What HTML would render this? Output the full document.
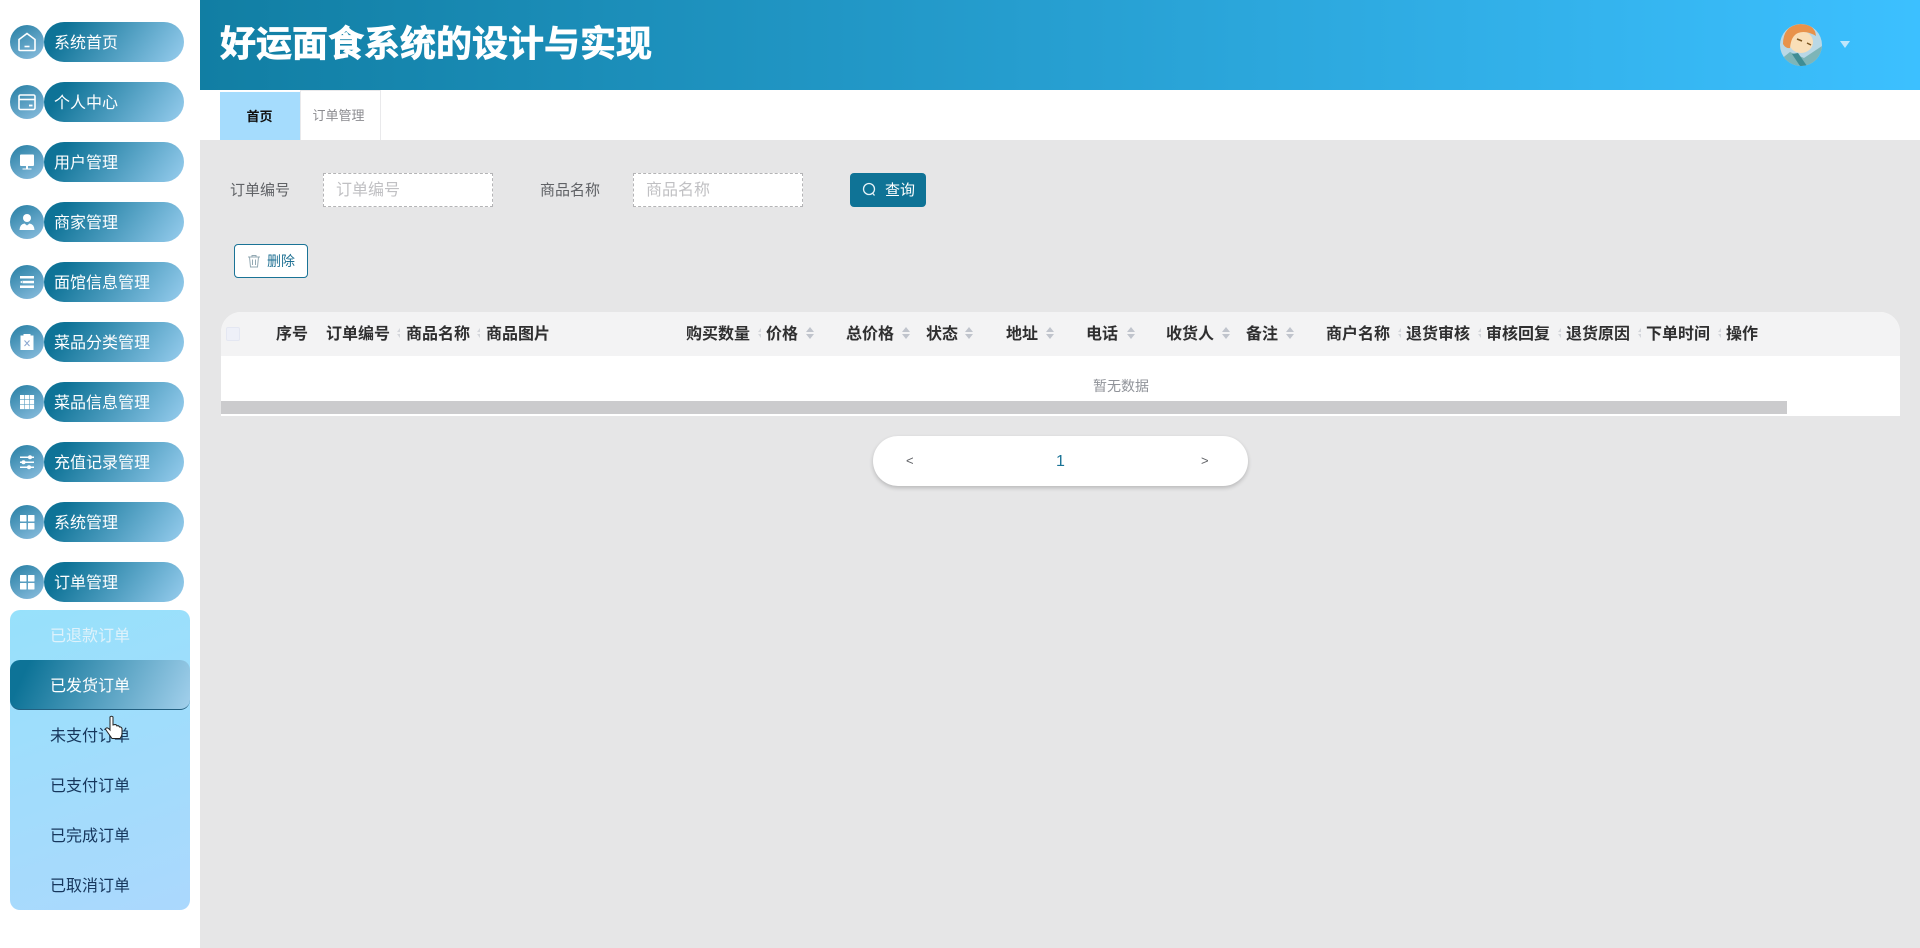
<!DOCTYPE html>
<html lang="zh-CN"><head><meta charset="utf-8"><title>好运面食系统的设计与实现</title>
<style>
*{box-sizing:border-box;margin:0;padding:0}
html,body{width:1920px;height:948px;overflow:hidden;background:#e6e6e7;font-family:"Liberation Sans","Noto Sans CJK SC",sans-serif}
.a{position:absolute}
#side{position:absolute;left:0;top:0;width:200px;height:948px;background:#fff}
.c{position:absolute;left:10px;width:34px;height:34px;border-radius:50%;background:linear-gradient(150deg,#257ea3,#8dbfe0)}
.c svg{position:absolute;left:0;top:0;width:34px;height:34px}
.p{position:absolute;left:44px;width:140px;height:40px;border-radius:20px;background:linear-gradient(125deg,#0e7397 15%,#97cdee 100%);color:#fff;font-size:16px;line-height:43px;padding-left:10px;white-space:nowrap}
#sub{position:absolute;left:10px;top:610px;width:180px;height:300px;border-radius:10px;background:linear-gradient(160deg,#97e1fb,#abd8fd)}
#sub div{height:50px;line-height:53px;font-size:16px;padding-left:40px;color:#16365c;white-space:nowrap}
#sub .act{color:#fff;border-radius:10px;background:linear-gradient(115deg,#0d7397 10%,#a2d0ec 100%);border-bottom:1px solid #225f80}
#head{position:absolute;left:200px;top:0;width:1720px;height:90px;background:linear-gradient(90deg,#117ea3,#3cc0ff)}
#head h1{position:absolute;left:20px;top:20px;font-size:36px;line-height:48px;color:#fff;font-weight:700;-webkit-text-stroke:.7px #fff;white-space:nowrap}
#tabs{position:absolute;left:200px;top:90px;width:1720px;height:50px;background:#fff}
.lab{position:absolute;font-size:15px;line-height:20px;color:#606266;white-space:nowrap}
.inp{position:absolute;top:173px;width:170px;height:34px;background:#fff;border:1px dashed #b4b4b6;font-size:16px;line-height:34px;padding-left:12px;color:#c0c0c3;white-space:nowrap}
.th{position:absolute;top:324px;font-size:16px;line-height:22px;font-weight:600;color:#2f2f30;white-space:nowrap}
.s{position:absolute;top:326px;width:8px;height:14px}
.h{position:absolute;top:327px;width:3px;height:12px}
</style></head><body>
<div id="side">
<div class="c" style="top:25px"><svg viewBox="0 0 34 34" fill="none" stroke="#fff" stroke-width="1.6"><path d="M17 8.5L25 14.5V24.5Q25 25.5 24 25.5H10Q9 25.5 9 24.5V14.5Z"/><path d="M14.5 21.5H19.5"/></svg></div><div class="p" style="top:22px">系统首页</div>
<div class="c" style="top:85px"><svg viewBox="0 0 34 34" fill="none" stroke="#fff" stroke-width="1.6"><rect x="9" y="10" width="16" height="14.5" rx="1.5"/><path d="M9 14.5H25"/><path d="M19 20.5H22.5" stroke-width="1.8"/></svg></div><div class="p" style="top:82px">个人中心</div>
<div class="c" style="top:145px"><svg viewBox="0 0 34 34" fill="#fff"><rect x="10" y="9.5" width="14" height="11.500" rx="1"/><rect x="16" y="21" width="2" height="3"/><rect x="12.5" y="23.500" width="9" height="1"/></svg></div><div class="p" style="top:142px">用户管理</div>
<div class="c" style="top:205px"><svg viewBox="0 0 34 34" fill="#fff"><circle cx="17" cy="13" r="4"/><path d="M9.500 25Q10 19 14.500 18.500L17 20.500L19.500 18.500Q24 19 24.500 25Z"/></svg></div><div class="p" style="top:202px">商家管理</div>
<div class="c" style="top:265px"><svg viewBox="0 0 34 34" fill="#fff"><rect x="10" y="11" width="14" height="2.500"/><rect x="13" y="15.800" width="11" height="2.500"/><rect x="10" y="20.500" width="14" height="2.500"/><path d="M10 17L12.500 15.500V18.500Z"/></svg></div><div class="p" style="top:262px">面馆信息管理</div>
<div class="c" style="top:325px"><svg viewBox="0 0 34 34"><path fill="#fff" d="M10.500 10.500H13.500V9H20.500V10.500H23.500V25H10.500Z"/><path stroke="#8aa6d0" stroke-width="1" fill="none" d="M14.500 15.500L19.500 21M19.500 15.500L14.500 21"/></svg></div><div class="p" style="top:322px">菜品分类管理</div>
<div class="c" style="top:385px"><svg viewBox="0 0 34 34" fill="#fff"><rect x="10" y="10" width="4.300" height="4.300"/><rect x="14.900" y="10" width="4.300" height="4.300"/><rect x="19.800" y="10" width="4.300" height="4.300"/><rect x="10" y="14.900" width="4.300" height="4.300"/><rect x="14.900" y="14.900" width="4.300" height="4.300"/><rect x="19.800" y="14.900" width="4.300" height="4.300"/><rect x="10" y="19.800" width="4.300" height="4.300"/><rect x="14.900" y="19.800" width="4.300" height="4.300"/><rect x="19.800" y="19.800" width="4.300" height="4.300"/></svg></div><div class="p" style="top:382px">菜品信息管理</div>
<div class="c" style="top:445px"><svg viewBox="0 0 34 34" fill="#fff"><rect x="10" y="11.500" width="14" height="1.500"/><rect x="10" y="16.500" width="14" height="1.500"/><rect x="10" y="21.500" width="14" height="1.500"/><circle cx="20" cy="12.200" r="2"/><circle cx="13.500" cy="17.200" r="2"/><circle cx="19" cy="22.200" r="2"/></svg></div><div class="p" style="top:442px">充值记录管理</div>
<div class="c" style="top:505px"><svg viewBox="0 0 34 34" fill="#fff"><rect x="10" y="10" width="6.500" height="6.500" rx=".5"/><rect x="18" y="10" width="6.500" height="6.500" rx=".5"/><rect x="10" y="18" width="6.500" height="6.500" rx=".5"/><rect x="18" y="18" width="6.500" height="6.500" rx=".5"/></svg></div><div class="p" style="top:502px">系统管理</div>
<div class="c" style="top:565px"><svg viewBox="0 0 34 34" fill="#fff"><rect x="10" y="10" width="6.500" height="6.500" rx=".5"/><rect x="18" y="10" width="6.500" height="6.500" rx=".5"/><rect x="10" y="18" width="6.500" height="6.500" rx=".5"/><rect x="18" y="18" width="6.500" height="6.500" rx=".5"/></svg></div><div class="p" style="top:562px">订单管理</div>
<div id="sub"><div style="color:#dff2fb">已退款订单</div><div class="act">已发货订单</div><div>未支付订单</div><div>已支付订单</div><div>已完成订单</div><div>已取消订单</div></div>
<svg class="a" style="left:104px;top:715px" width="20" height="25" viewBox="0 0 20 25"><path fill="#fff" stroke="#222" stroke-width="1" d="M6 2Q7.500 .5 9 2V10L11 9.500Q12.500 9.500 13 11Q14.500 10 15.500 12Q17 11.500 18 13.500V18Q18 21 16 23.500H8L2 15Q1 13.500 2.500 13Q4 12.500 6 15Z"/></svg>
</div>
<div id="head"><h1>好运面食系统的设计与实现</h1>
<svg class="a" style="left:1580px;top:24px" width="42" height="42" viewBox="0 0 42 42"><defs><clipPath id="av"><circle cx="21" cy="21" r="21"/></clipPath></defs><g clip-path="url(#av)"><rect width="42" height="42" fill="#b9d8e6"/><path d="M0 36L10 28L24 34L42 22V42H0Z" fill="#7db5b8"/><path d="M12 30L20 42H27L18 29Z" fill="#3f8d94"/><ellipse cx="21" cy="18" rx="12" ry="11" fill="#f9dfb8"/><path d="M3 20Q3 2 20 0Q35 0 36 12Q26 6 18 9Q11 12 10 24Q6 25 3 20Z" fill="#e8924a"/><path d="M17 15L22 17M27 19L31 21" stroke="#7a5520" stroke-width="1.500"/></g></svg>
<div class="a" style="left:1640px;top:41px;width:0;height:0;border-left:5px solid transparent;border-right:5px solid transparent;border-top:7px solid #bfe6fb"></div>
</div>
<div id="tabs">
<div class="a" style="left:20px;top:2px;width:81px;height:48px;background:#a5dcfd;color:#111;font-size:13px;font-weight:700;line-height:49px;text-align:center;padding-right:2px">首页</div>
<div class="a" style="left:100px;top:0;width:81px;height:50px;background:#fff;border:1px solid #e9e9eb;border-bottom:0;color:#8b8b8f;font-size:13px;line-height:50px;text-align:center;padding-right:4px">订单管理</div>
</div>
<div class="lab" style="left:230px;top:181px">订单编号</div>
<div class="inp" style="left:323px">订单编号</div>
<div class="lab" style="left:540px;top:181px">商品名称</div>
<div class="inp" style="left:633px">商品名称</div>
<div class="a" style="left:850px;top:173px;width:76px;height:34px;border-radius:4px;background:#0f7396;color:#fff;font-size:15px;line-height:36px;padding-left:35px;white-space:nowrap">查询
<svg class="a" style="left:12px;top:9px" width="15" height="15" viewBox="0 0 15 15" fill="none" stroke="#e6f3f8" stroke-width="1.300"><circle cx="7" cy="7" r="5.500"/><path d="M10.500 11L12.500 13.500"/></svg></div>
<div class="a" style="left:234px;top:244px;width:74px;height:34px;border-radius:4px;background:#fff;border:1px solid #1a7396;color:#1f7093;font-size:14px;line-height:33px;padding-left:32px;white-space:nowrap">删除
<svg class="a" style="left:12px;top:9px" width="14" height="14" viewBox="0 0 14 14" fill="none" stroke="#93a9b3" stroke-width="1"><path d="M1 3H13M5 3V1.500H9V3M2.500 3L3.500 13H10.500L11.500 3M5.500 5.500V11M8.500 5.500V11"/></svg></div>

<div class="a" style="left:221px;top:312px;width:1679px;height:104px;background:#fff;border-radius:20px 20px 0 0;overflow:hidden">
<div class="a" style="left:0;top:0;width:1679px;height:44px;background:#f3f3f4"></div>
<div class="a" style="left:0;top:89px;width:1566px;height:13px;background:#cbcbcd"></div>
</div>
<div class="a" style="left:226px;top:327px;width:14px;height:14px;background:#eef0f8;border:1px solid #e4e7f2;border-radius:2px"></div>
<div class="th" style="left:276px">序号</div>
<div class="th" style="left:326px">订单编号</div>
<div class="th" style="left:406px">商品名称</div>
<div class="th" style="left:486px">商品图片</div>
<div class="th" style="left:686px">购买数量</div>
<div class="th" style="left:766px">价格</div>
<div class="th" style="left:846px">总价格</div>
<div class="th" style="left:926px">状态</div>
<div class="th" style="left:1006px">地址</div>
<div class="th" style="left:1086px">电话</div>
<div class="th" style="left:1166px">收货人</div>
<div class="th" style="left:1246px">备注</div>
<div class="th" style="left:1326px">商户名称</div>
<div class="th" style="left:1406px">退货审核</div>
<div class="th" style="left:1486px">审核回复</div>
<div class="th" style="left:1566px">退货原因</div>
<div class="th" style="left:1646px">下单时间</div>
<div class="th" style="left:1726px">操作</div>
<svg class="s" style="left:806px" viewBox="0 0 8 14" fill="#c0c4cc"><path d="M4 1L8 6H0ZM4 13L0 8H8Z"/></svg>
<svg class="s" style="left:902px" viewBox="0 0 8 14" fill="#c0c4cc"><path d="M4 1L8 6H0ZM4 13L0 8H8Z"/></svg>
<svg class="s" style="left:965px" viewBox="0 0 8 14" fill="#c0c4cc"><path d="M4 1L8 6H0ZM4 13L0 8H8Z"/></svg>
<svg class="s" style="left:1046px" viewBox="0 0 8 14" fill="#c0c4cc"><path d="M4 1L8 6H0ZM4 13L0 8H8Z"/></svg>
<svg class="s" style="left:1127px" viewBox="0 0 8 14" fill="#c0c4cc"><path d="M4 1L8 6H0ZM4 13L0 8H8Z"/></svg>
<svg class="s" style="left:1222px" viewBox="0 0 8 14" fill="#c0c4cc"><path d="M4 1L8 6H0ZM4 13L0 8H8Z"/></svg>
<svg class="s" style="left:1286px" viewBox="0 0 8 14" fill="#c0c4cc"><path d="M4 1L8 6H0ZM4 13L0 8H8Z"/></svg>
<svg class="h" style="left:397px" viewBox="0 0 3 12" fill="#d4d6db"><path d="M3 1V5H0ZM3 11V7H0Z"/></svg>
<svg class="h" style="left:477px" viewBox="0 0 3 12" fill="#d4d6db"><path d="M3 1V5H0ZM3 11V7H0Z"/></svg>
<svg class="h" style="left:758px" viewBox="0 0 3 12" fill="#d4d6db"><path d="M3 1V5H0ZM3 11V7H0Z"/></svg>
<svg class="h" style="left:1398px" viewBox="0 0 3 12" fill="#d4d6db"><path d="M3 1V5H0ZM3 11V7H0Z"/></svg>
<svg class="h" style="left:1478px" viewBox="0 0 3 12" fill="#d4d6db"><path d="M3 1V5H0ZM3 11V7H0Z"/></svg>
<svg class="h" style="left:1558px" viewBox="0 0 3 12" fill="#d4d6db"><path d="M3 1V5H0ZM3 11V7H0Z"/></svg>
<svg class="h" style="left:1638px" viewBox="0 0 3 12" fill="#d4d6db"><path d="M3 1V5H0ZM3 11V7H0Z"/></svg>
<svg class="h" style="left:1718px" viewBox="0 0 3 12" fill="#d4d6db"><path d="M3 1V5H0ZM3 11V7H0Z"/></svg>
<div class="a" style="left:1093px;top:376px;font-size:14px;line-height:20px;color:#909399;white-space:nowrap">暂无数据</div>

<div class="a" style="left:873px;top:436px;width:375px;height:50px;border-radius:25px;background:#fff;box-shadow:0 2px 4px rgba(0,0,0,.2)"></div>
<div class="a" style="left:906px;top:451px;font-size:13px;line-height:20px;color:#606266">&lt;</div>
<div class="a" style="left:1056px;top:452px;font-size:16px;line-height:20px;color:#1a7396">1</div>
<div class="a" style="left:1201px;top:451px;font-size:13px;line-height:20px;color:#606266">&gt;</div>
</body></html>
